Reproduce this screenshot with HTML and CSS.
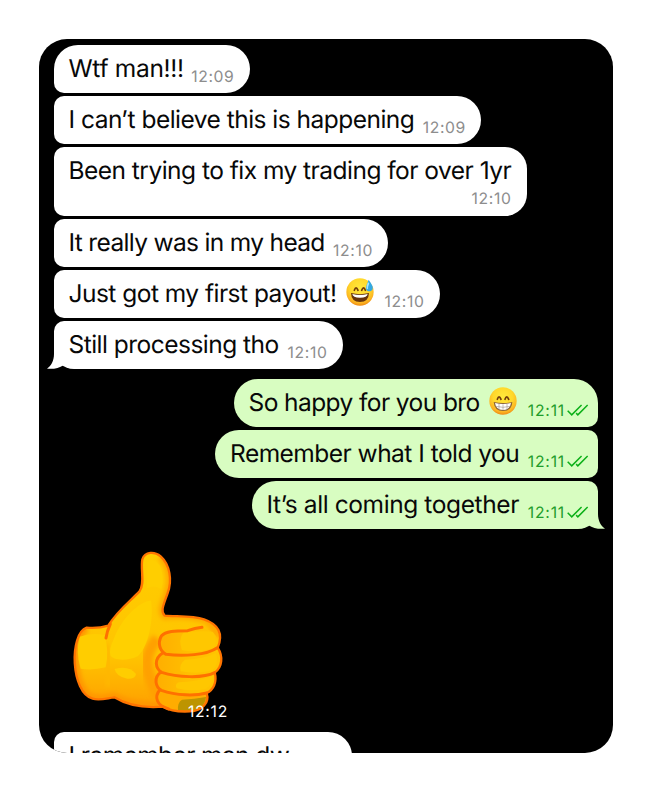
FILE: index.html
```html
<!DOCTYPE html>
<html lang="en">
<head>
<meta charset="utf-8">
<title>Chat</title>
<link rel="stylesheet" href="styles.css">
</head>
<body>
<svg class="defs" width="0" height="0" aria-hidden="true">
  <defs>
    <radialGradient id="face" cx=".5" cy=".35" r=".65">
      <stop offset="0" stop-color="#ffe83c"/><stop offset=".55" stop-color="#ffd82b"/><stop offset=".85" stop-color="#fcb422"/><stop offset="1" stop-color="#ef8a12"/>
    </radialGradient>
    <linearGradient id="skin" x1="0" y1="0" x2="0" y2="1">
      <stop offset="0" stop-color="#ffcd00"/><stop offset=".65" stop-color="#ffc400"/><stop offset="1" stop-color="#ff9d00"/>
    </linearGradient>
    <linearGradient id="finger" x1="0" y1="0" x2="1" y2="0">
      <stop offset="0" stop-color="#ffae00"/><stop offset=".5" stop-color="#ffbe00"/><stop offset="1" stop-color="#ffc400"/>
    </linearGradient>
    <filter id="soft" x="-30%" y="-30%" width="160%" height="160%"><feGaussianBlur stdDeviation="7"/></filter>
    <path id="ticks" d="M2 20 L14 32 L43 3 M27 27 L32 32 L61 3" fill="none" stroke="#0cb018" stroke-width="4.4"/>
    <symbol id="tail" viewBox="0 0 22 29">
      <path d="M7 0 V14 C7 21 4 26 0 28.7 Q10 29.6 16.5 25.2 L22 20 V0Z"/>
    </symbol>
  </defs>
</svg>
<main class="chat">
  <section class="group incoming">
    <div class="bubble first w1"><span class="text">Wtf man!!!</span><time>12:09</time></div>
    <div class="bubble w2"><span class="text">I can’t believe this is happening</span><time>12:09</time></div>
    <div class="bubble tall w3"><span class="text">Been trying to fix my trading for over 1yr</span><time>12:10</time></div>
    <div class="bubble w4"><span class="text">It really was in my head</span><time>12:10</time></div>
    <div class="bubble w5"><span class="text">Just got my first payout!</span>
      <svg class="emoji" viewBox="0 0 84 84">
        <circle cx="42" cy="42" r="41" fill="url(#face)"/>
        <path d="M25 37 Q30 22 36 37 M47 37 Q53 22 58 37" fill="none" stroke="#713b0b" stroke-width="5" stroke-linecap="round"/>
        <path d="M15 45 Q42 52 69 45 Q68 72 42 72 Q16 72 15 45Z" fill="#67350c"/>
        <path d="M19 48 Q42 54 65 48 Q64 59 42 59 Q20 59 19 48Z" fill="#fff"/>
        <path d="M68 5 C76 18 82 24 80 32 C77 43 62 42 60 32 C59 24 65 15 68 5Z" fill="#33a9e5"/>
        <path d="M67 16 C64 24 63 28 64 31" fill="none" stroke="#a5e4ff" stroke-width="5" stroke-linecap="round"/>
      </svg><time>12:10</time></div>
    <div class="bubble last w6"><svg class="tail"><use href="#tail"/></svg><span class="text">Still processing tho</span><time>12:10</time></div>
  </section>
  <section class="group outgoing">
    <div class="bubble first w7"><span class="text">So happy for you bro</span>
      <svg class="emoji" viewBox="0 0 84 84">
        <circle cx="42" cy="42" r="41" fill="url(#face)"/>
        <path d="M25 37 Q30 22 36 37 M48 37 Q53 22 59 37" fill="none" stroke="#713b0b" stroke-width="5" stroke-linecap="round"/>
        <path d="M14 45 Q42 51 70 45 Q68 72 42 72 Q16 72 14 45Z" fill="#8b6336"/>
        <path d="M18 48 Q42 54 66 48 Q63 69 42 69 Q21 69 18 48Z" fill="#fff"/>
        <path d="M20 58 Q42 64 64 58 M30 51 V67 M42 52 V69 M54 51 V67" fill="none" stroke="#a79b91" stroke-width="2"/>
      </svg><time>12:11</time><svg class="ticks" viewBox="0 0 62 36"><use href="#ticks"/></svg></div>
    <div class="bubble w8"><span class="text">Remember what I told you</span><time>12:11</time><svg class="ticks" viewBox="0 0 62 36"><use href="#ticks"/></svg></div>
    <div class="bubble last w9"><svg class="tail"><use href="#tail"/></svg><span class="text">It’s all coming together</span><time>12:11</time><svg class="ticks" viewBox="0 0 62 36"><use href="#ticks"/></svg></div>
  </section>
  <div class="sticker">
    <svg class="thumb" viewBox="0 0 540 570">
      <clipPath id="hand"><path d="M80 263 Q115 266 145 257 C171 213 210 184 238 155 C256 133 241 88 247 58 C255 34 284 34 302 49 C330 74 337 122 323 159 C311 194 300 214 314 227 C354 230 398 227 432 238 C475 253 491 281 473 323 C490 349 487 382 464 398 C472 426 460 450 440 459 C449 487 428 513 389 514 C350 516 326 510 311 500 C255 505 202 496 163 472 C139 475 119 482 98 476 C32 459 27 281 80 263Z"/></clipPath>
      <path d="M80 263 Q115 266 145 257 C171 213 210 184 238 155 C256 133 241 88 247 58 C255 34 284 34 302 49 C330 74 337 122 323 159 C311 194 300 214 314 227 C354 230 398 227 432 238 C475 253 491 281 473 323 C490 349 487 382 464 398 C472 426 460 450 440 459 C449 487 428 513 389 514 C350 516 326 510 311 500 C255 505 202 496 163 472 C139 475 119 482 98 476 C32 459 27 281 80 263Z" fill="url(#skin)"/>
      <g clip-path="url(#hand)">
        <path d="M80 263 C27 281 32 459 98 476 Q130 482 163 472 Q205 500 311 500" fill="none" stroke="#ff9600" stroke-width="28" filter="url(#soft)"/>
        <path d="M302 49 C330 74 337 122 323 159 C311 194 300 214 314 227 Q398 222 445 242 L480 290" fill="none" stroke="#ffa800" stroke-width="24" filter="url(#soft)"/>
        <path d="M292 295 C250 345 250 385 295 470" fill="none" stroke="#ffa000" stroke-width="34" filter="url(#soft)"/>
        <path d="M137 310 Q150 365 145 440" fill="none" stroke="#ffb700" stroke-width="16" filter="url(#soft)"/>
        <path d="M160 300 C185 230 245 180 273 182 C282 235 266 319 234 348 C202 365 157 361 151 345 Q147 326 160 300Z" fill="#ffd000"/>
        <path d="M59 290 Q92 277 134 285 Q148 335 137 382 Q96 392 62 386 Q46 335 59 290Z" fill="#ffcd00"/>
        <path d="M164 387 Q206 374 228 402 Q227 417 202 416 Q168 410 164 387Z" fill="#ffcd00"/>
        <path d="M262 65 Q284 52 300 79 Q314 114 304 148 Q284 133 261 145Z" fill="#ffce00"/>
        <path d="M426 262 C390 274 324 265 305 288 C290 320 303 340 324 345 C380 350 440 344 467 324 Q489 284 426 262Z" fill="url(#finger)"/>
        <path d="M305 337 C281 357 287 388 305 397 Q388 420 458 399 Q490 375 473 323 Q410 357 305 337Z" fill="url(#finger)"/>
        <path d="M303 396 C282 413 286 439 303 451 Q370 473 438 456 Q472 440 464 398 Q380 418 303 396Z" fill="url(#finger)"/>
        <path d="M298 447 C282 475 296 496 326 506 Q380 520 420 502 Q444 488 440 459 Q370 474 298 447Z" fill="#ffac00"/>
        <path d="M370 278 Q429 271 459 276 Q476 303 461 323 Q416 340 366 331 Q354 298 370 278Z" fill="#ffc700"/>
        <path d="M375 359 Q430 357 468 339 Q478 374 458 391 Q413 404 362 394 Q356 373 375 359Z" fill="#ffc800"/>
        <path d="M356 427 Q412 425 458 408 Q461 432 438 446 Q393 456 350 445 Q343 434 356 427Z" fill="#ffc700"/>
        <path d="M366 479 Q404 478 438 471 Q435 508 389 513 L354 513 Q351 488 366 479Z" fill="#bd9400"/>
      </g>
      <path d="M80 263 Q115 266 145 257 C171 213 210 184 238 155 C256 133 241 88 247 58 C255 34 284 34 302 49 C330 74 337 122 323 159 C311 194 300 214 314 227 C354 230 398 227 432 238 C475 253 491 281 473 323 C490 349 487 382 464 398 C472 426 460 450 440 459 C449 487 428 513 389 514 C350 516 326 510 311 500 C255 505 202 496 163 472 C139 475 119 482 98 476 C32 459 27 281 80 263Z" fill="none" stroke="#ff7400" stroke-width="7"/>
      <path d="M151 252 Q141 273 138 294 M426 262 C410 264 398 267 383 272 C345 272 317 273 304 288 C291 312 301 334 318 343 C370 350 440 345 472 323 M309 338 C279 357 287 386 305 397 C350 412 430 416 464 398 M303 396 C279 413 287 441 304 451 C350 467 405 468 440 459 M299 450 C281 472 291 497 326 507" fill="none" stroke="#ff7000" stroke-width="9" stroke-linecap="round"/>
    </svg>
    <time>12:12</time>
  </div>
  <section class="group incoming next">
    <div class="bubble w10"><span class="text">I remember man dw</span></div>
  </section>
</main>
</body>
</html>
```
FILE: styles.css
```css
* { box-sizing: border-box; }
body {
  margin: 0;
  height: 792px;
  padding: 39px 38.5px 39px 39px;
  background: #fff;
  font-family: Inter, "Liberation Sans", sans-serif;
  text-rendering: geometricPrecision;
  overflow: hidden;
}
.defs { position: absolute; }
.chat {
  height: 714px;
  padding: 6px 14.5px 0 15px;
  background: #000;
  border-radius: 28px;
  overflow: hidden;
}
.group { display: flex; flex-direction: column; gap: 3.2px; }
.incoming { align-items: flex-start; }
.outgoing { align-items: flex-end; margin-top: 9.4px; }
.bubble {
  position: relative;
  isolation: isolate;
  display: flex;
  height: 48px;
  padding: 0 15px;
  background: #fff;
  color: #080808;
  border-radius: 10px 24px 24px 10px;
  white-space: nowrap;
}
.incoming .first { border-top-left-radius: 24px; }
.incoming .last { border-bottom-left-radius: 20px; }
.outgoing .bubble {
  background: #d8fdc1;
  border-radius: 24px 10px 10px 24px;
  padding-right: 10.5px;
}
.outgoing .first { border-top-right-radius: 24px; }
.outgoing .last { border-bottom-right-radius: 20px; }
.text { font-size: 24.5px; line-height: 46px; letter-spacing: -0.52px; }
.incoming .text { margin-left: -0.5px; }
time {
  margin-left: auto;
  padding-top: 21px;
  font-size: 15.7px;
  line-height: 21px;
  letter-spacing: 0.65px;
  color: #8d8d8d;
}
.outgoing time { color: #1f9d2b; letter-spacing: 0.8px; }
.tall { flex-wrap: wrap; align-content: flex-start; height: 68.4px; border-radius: 10px 22px 22px 10px; padding-right: 14px; }
.tall time { padding-top: 0; margin-top: -5px; margin-right: 1px; }
.emoji { flex: none; width: 28px; height: 28px; margin: 8px 0 0 9.5px; }
.outgoing .emoji { margin-left: 9px; }
.ticks { flex: none; width: 21px; height: 12.2px; margin: 25px 0 0 1.5px; overflow: visible; }
.tail {
  position: absolute;
  z-index: -1;
  left: -7px;
  bottom: 0;
  width: 22px;
  height: 29px;
  fill: #fff;
}
.outgoing .tail { left: auto; right: -7px; transform: scaleX(-1); fill: #d8fdc1; }
.w1 { width: 195.5px; }
.w1 .text { letter-spacing: -0.3px; }
.w2 { width: 427px; }
.w3 { width: 472.5px; }
.w4 { width: 334px; }
.w4 .text { letter-spacing: -0.66px; }
.w5 { width: 385.5px; }
.w6 { width: 288.5px; }
.w7 { width: 364.5px; }
.w7 .text { letter-spacing: -0.58px; }
.w8 { width: 383px; }
.w9 { width: 346.5px; }
.w9 .text { letter-spacing: -0.4px; }
.w10 { width: 297.5px; }
.w10 .text { letter-spacing: -0.6px; }
.sticker { position: relative; width: 180px; height: 190px; margin: 10.6px 0 0 6px; }
.thumb { display: block; width: 180px; height: 190px; }
.sticker time { position: absolute; left: 128px; top: 161px; padding: 0; letter-spacing: 0.7px; color: #fff; }
.next { margin-top: 1.9px; }
```
